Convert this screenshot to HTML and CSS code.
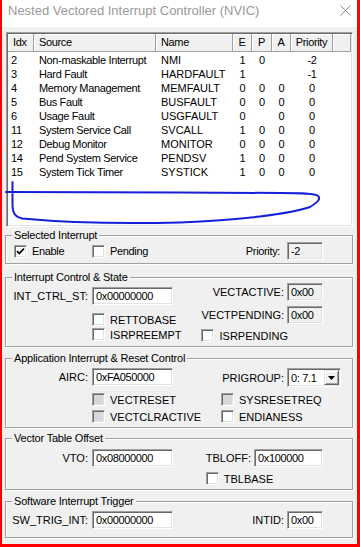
FILE: index.html
```html
<html lang="en">
  <head>
    <title>NVIC</title>
    <meta charset="utf-8">
    <link rel="stylesheet" href="styles.css">
  </head>
  <body>
<div class="window">
  <div class="titlebar">
    <span class="title">Nested Vectored Interrupt Controller (NVIC)</span>
    <svg class="close" width="11" height="11" viewBox="0 0 11 11"><path d="M0.5 0.5 L10.5 10.5 M10.5 0.5 L0.5 10.5" stroke="#8a8a8a" stroke-width="1" fill="none"/></svg>
  </div>

  <div class="list">
    <div class="hd">
      <span class="c-idx">Idx</span><span class="c-src">Source</span><span class="c-name">Name</span><span class="c-e mid">E</span><span class="c-p mid">P</span><span class="c-a mid">A</span><span class="c-pri mid">Priority</span><span class="c-fill"></span>
    </div>
    <div class="rows">
      <div class="r"><span class="c-idx">2</span><span class="c-src">Non-maskable Interrupt</span><span class="c-name">NMI</span><span class="c-e mid">1</span><span class="c-p mid">0</span><span class="c-a mid"></span><span class="c-pri mid">-2</span></div>
      <div class="r"><span class="c-idx">3</span><span class="c-src">Hard Fault</span><span class="c-name">HARDFAULT</span><span class="c-e mid">1</span><span class="c-p mid"></span><span class="c-a mid"></span><span class="c-pri mid">-1</span></div>
      <div class="r"><span class="c-idx">4</span><span class="c-src">Memory Management</span><span class="c-name">MEMFAULT</span><span class="c-e mid">0</span><span class="c-p mid">0</span><span class="c-a mid">0</span><span class="c-pri mid">0</span></div>
      <div class="r"><span class="c-idx">5</span><span class="c-src">Bus Fault</span><span class="c-name">BUSFAULT</span><span class="c-e mid">0</span><span class="c-p mid">0</span><span class="c-a mid">0</span><span class="c-pri mid">0</span></div>
      <div class="r"><span class="c-idx">6</span><span class="c-src">Usage Fault</span><span class="c-name">USGFAULT</span><span class="c-e mid">0</span><span class="c-p mid"></span><span class="c-a mid">0</span><span class="c-pri mid">0</span></div>
      <div class="r"><span class="c-idx">11</span><span class="c-src">System Service Call</span><span class="c-name">SVCALL</span><span class="c-e mid">1</span><span class="c-p mid">0</span><span class="c-a mid">0</span><span class="c-pri mid">0</span></div>
      <div class="r"><span class="c-idx">12</span><span class="c-src">Debug Monitor</span><span class="c-name">MONITOR</span><span class="c-e mid">0</span><span class="c-p mid">0</span><span class="c-a mid">0</span><span class="c-pri mid">0</span></div>
      <div class="r"><span class="c-idx">14</span><span class="c-src">Pend System Service</span><span class="c-name">PENDSV</span><span class="c-e mid">1</span><span class="c-p mid">0</span><span class="c-a mid">0</span><span class="c-pri mid">0</span></div>
      <div class="r"><span class="c-idx">15</span><span class="c-src">System Tick Timer</span><span class="c-name">SYSTICK</span><span class="c-e mid">1</span><span class="c-p mid">0</span><span class="c-a mid">0</span><span class="c-pri mid">0</span></div>
    </div>
  </div>

  <!-- Selected Interrupt -->
  <div class="group g1">
    <div class="caption">Selected Interrupt</div>
    <div class="cols">
      <div class="col-left">
        <div class="line first">
          <span class="opt low enable"><span class="chk"><svg width="11" height="11" viewBox="0 0 11 11"><path d="M2 5 L4.3 7.5 L9 2.5" stroke="#000" stroke-width="1.8" fill="none"/></svg></span>Enable</span>
          <span class="opt low"><span class="chk"></span>Pending</span>
        </div>
      </div>
      <div class="col-right">
        <div class="field first"><span class="lbl prio">Priority:</span><span class="tb ro w36">-2</span></div>
      </div>
    </div>
  </div>

  <!-- Interrupt Control & State -->
  <div class="group g2">
    <div class="caption">Interrupt Control &amp; State</div>
    <div class="cols">
      <div class="col-left">
        <div class="field m9"><span class="lbl left">INT_CTRL_ST:</span><span class="tb w81">0x00000000</span></div>
        <div class="opt ind m8"><span class="chk"></span>RETTOBASE</div>
        <div class="opt ind m2"><span class="chk"></span>ISRPREEMPT</div>
      </div>
      <div class="col-right">
        <div class="field m5"><span class="lbl">VECTACTIVE:</span><span class="tb ro w36">0x00</span></div>
        <div class="field m5"><span class="lbl">VECTPENDING:</span><span class="tb ro w36">0x00</span></div>
        <div class="opt m5"><span class="chk"></span>ISRPENDING</div>
      </div>
    </div>
  </div>

  <!-- Application Interrupt & Reset Control -->
  <div class="group g3">
    <div class="caption">Application Interrupt &amp; Reset Control</div>
    <div class="cols">
      <div class="col-left">
        <div class="field m9"><span class="lbl left">AIRC:</span><span class="tb w81">0xFA050000</span></div>
        <div class="opt ind m7"><span class="chk dim"></span>VECTRESET</div>
        <div class="opt ind m4"><span class="chk dim"></span>VECTCLRACTIVE</div>
      </div>
      <div class="col-right">
        <div class="field m9 sel-row"><span class="lbl">PRIGROUP:</span><span class="select">0: 7.1<span class="drop"><svg width="7" height="4" viewBox="0 0 7 4"><path d="M0 0 H7 L3.5 4 Z" fill="#000"/></svg></span></span></div>
        <div class="opt m6"><span class="chk dim"></span>SYSRESETREQ</div>
        <div class="opt m4"><span class="chk"></span>ENDIANESS</div>
      </div>
    </div>
  </div>

  <!-- Vector Table Offset -->
  <div class="group g4">
    <div class="caption">Vector Table Offset</div>
    <div class="cols">
      <div class="col-left">
        <div class="field m10"><span class="lbl left">VTO:</span><span class="tb w81">0x08000000</span></div>
      </div>
      <div class="col-right">
        <div class="field m10"><span class="lbl">TBLOFF:</span><span class="tb w69">0x100000</span></div>
        <div class="opt m5"><span class="chk"></span>TBLBASE</div>
      </div>
    </div>
  </div>

  <!-- Software Interrupt Trigger -->
  <div class="group g5">
    <div class="caption">Software Interrupt Trigger</div>
    <div class="cols">
      <div class="col-left">
        <div class="field m9"><span class="lbl left">SW_TRIG_INT:</span><span class="tb w81">0x00000000</span></div>
      </div>
      <div class="col-right">
        <div class="field m9"><span class="lbl">INTID:</span><span class="tb w36">0x00</span></div>
      </div>
    </div>
  </div>
</div>

<svg class="scribble" width="360" height="547" viewBox="0 0 360 547">
  <path d="M12.5 182 L12.5 204 C12.5 213 15 217 22 218.5 C60 222 120 224 180 222.5 C240 220 290 214 310 207 C318 202 321 199 318 196 C315 193 300 193 280 193 L180 192.5 L6 192" stroke="#1420d8" stroke-width="2" fill="none" stroke-linejoin="round" stroke-linecap="round"/>
</svg>
  </body>
</html>
```

FILE: styles.css
```css
* { box-sizing: border-box; }
body {
	margin: 0;
	background: #fff;
	font-family: "Liberation Sans", Arial, sans-serif;
	font-size: 11px;
	letter-spacing: -0.35px;
	color: #000;
}
.window {
	width: 360px;
	height: 547px;
	border-left: 2px solid #f00;
	border-right: 3px solid #f00;
	border-bottom: 3px solid #f00;
	background: #f0f0f0;
}
.titlebar {
	height: 27px;
	background: #fff;
	display: flex;
	align-items: flex-start;
}
.title {
	font-size: 13px;
	letter-spacing: 0;
	line-height: 21px;
	color: #999;
	padding-left: 6px;
}
.close { margin: 5px 6px 0 auto; }

/* list view */
.list {
	margin: 5px 0 0 4px;
	width: 347px;
	height: 195px;
	padding: 1px;
	background: #fff;
	border: 1px solid;
	border-color: #a0a0a0 #fff #fff #a0a0a0;
	box-shadow: inset 1px 1px 0 #696969, inset -1px -1px 0 #e3e3e3;
}
.hd { display: flex; height: 18px; }
.hd span {
	height: 18px;
	line-height: 17px;
	padding-left: 5px;
	background: #f0f0f0;
	border-right: 1px solid #a0a0a0;
	border-bottom: 1px solid #a0a0a0;
	box-shadow: inset 1px 1px 0 #fff;
}
.hd span.mid { padding-left: 0; }
.hd .c-fill { flex: 1; }
.rows { padding-top: 1px; }
.r { display: flex; height: 14px; line-height: 14px; white-space: nowrap; }
.r span { padding-left: 5px; }
.r .c-idx { padding-left: 3px; }
.r span.mid { padding-left: 0; }
.r .c-name { letter-spacing: 0; }
.c-idx { width: 26px; }
.c-src { width: 122px; }
.c-name { width: 77px; }
.c-e { width: 19px; }
.c-p { width: 20px; }
.c-a { width: 19px; }
.c-pri { width: 42px; }
.mid { text-align: center; }

/* group boxes */
.group {
	margin-left: 3px;
	width: 348px;
	border: 1px solid #a0a0a0;
	box-shadow: 1px 1px 0 #fff, inset 1px 1px 0 #fff;
}
.g1 { margin-top: 8px; height: 29px; }
.g2 { margin-top: 13px; height: 70px; }
.g3 { margin-top: 11px; height: 70px; }
.g4 { margin-top: 10px; height: 52px; }
.g5 { margin-top: 11px; height: 37px; }
.caption {
	display: table;
	margin: -7px 0 -6px 6px;
	padding: 0 2px;
	line-height: 13px;
	letter-spacing: -0.2px;
	background: #f0f0f0;
}
.cols { display: flex; }
.col-left { width: 215px; }
.col-right { flex: 1; padding-right: 29px; }

.line { display: flex; align-items: center; height: 18px; padding-left: 8px; }
.first { margin-top: 6px; }
.m2 { margin-top: 2px; }
.m4 { margin-top: 4px; }
.m5 { margin-top: 5px; }
.m6 { margin-top: 6px; }
.m7 { margin-top: 7px; }
.m8 { margin-top: 8px; }
.m9 { margin-top: 9px; }
.m10 { margin-top: 10px; }

.field { display: flex; align-items: center; justify-content: flex-end; height: 18px; }
.col-left .field { justify-content: flex-start; }
.lbl { margin-right: 3px; white-space: nowrap; letter-spacing: 0; }
.lbl.left { width: 86px; margin-right: 0; padding-right: 4px; text-align: right; }
.lbl.prio { margin-right: 7px; letter-spacing: -0.35px; }

.tb {
	height: 18px;
	line-height: 16px;
	padding-left: 3px;
	background: #fff;
	border: 1px solid;
	border-color: #a0a0a0 #fff #fff #a0a0a0;
	box-shadow: inset 1px 1px 0 #696969, inset -1px -1px 0 #e3e3e3;
	white-space: nowrap;
}
.tb.ro { background: #f0f0f0; }
.w36 { width: 36px; }
.w69 { width: 69px; }
.w81 { width: 81px; }

.sel-row { height: 19px; margin-right: -18px; }
.select {
	display: flex;
	align-items: center;
	width: 54px;
	height: 19px;
	padding-left: 3px;
	background: #fff;
	border: 1px solid;
	border-color: #a0a0a0 #fff #fff #a0a0a0;
	box-shadow: inset 1px 1px 0 #696969, inset -1px -1px 0 #e3e3e3;
}
.drop {
	margin-left: auto;
	margin-right: 1px;
	width: 15px;
	height: 15px;
	display: flex;
	align-items: center;
	justify-content: center;
	background: #f0f0f0;
	border: 1px solid;
	border-color: #e3e3e3 #696969 #696969 #e3e3e3;
	box-shadow: inset 1px 1px 0 #fff, inset -1px -1px 0 #a0a0a0;
}

/* checkboxes */
.opt { display: flex; align-items: center; height: 13px; white-space: nowrap; letter-spacing: 0; }
.opt.low { letter-spacing: -0.35px; }
.opt.ind { padding-left: 86px; }
.enable { width: 78px; }
.chk {
	width: 13px;
	height: 13px;
	flex: none;
	margin-right: 5px;
	display: flex;
	align-items: center;
	justify-content: center;
	background: #fff;
	border: 1px solid;
	border-color: #a0a0a0 #fff #fff #a0a0a0;
	box-shadow: inset 1px 1px 0 #696969, inset -1px -1px 0 #e3e3e3;
}
.chk.dim { background: #d8d8d8; }

.scribble { position: absolute; left: 0; top: 0; pointer-events: none; }
```
